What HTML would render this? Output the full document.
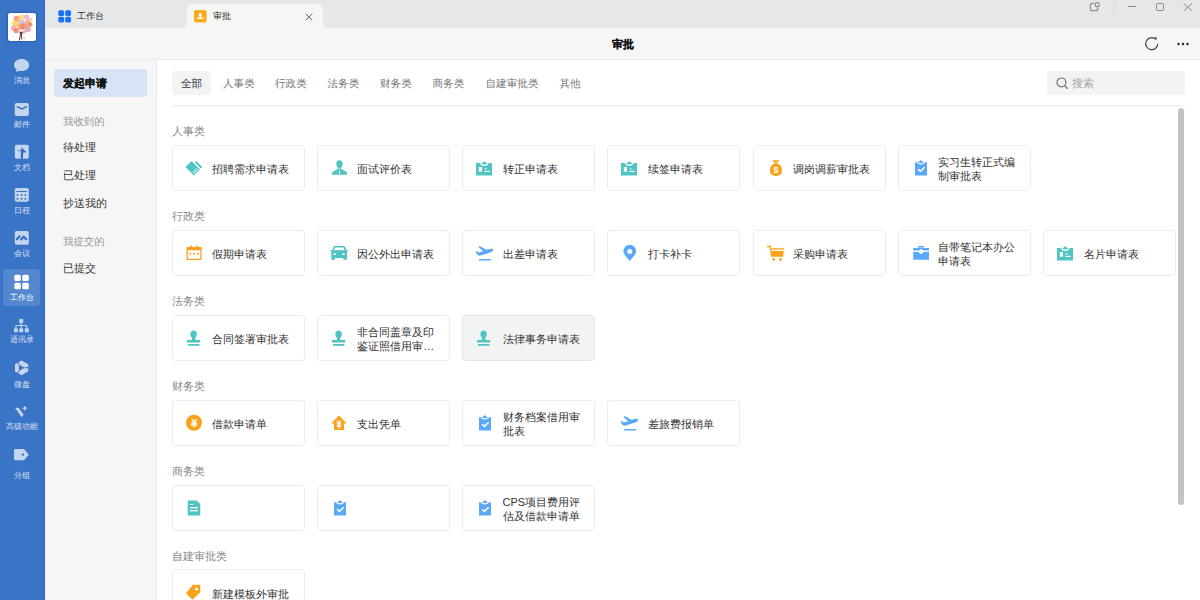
<!DOCTYPE html>
<html><head><meta charset="utf-8"><style>
*{box-sizing:border-box;margin:0;padding:0}
html,body{width:1200px;height:600px;overflow:hidden;background:#fff;font-family:"Liberation Sans",sans-serif;color:#333}
#side{position:absolute;left:0;top:0;width:45px;height:600px;background:#3a74c7;border-right:2.5px solid #336ccb}
#avatar{position:absolute;left:8px;top:13px;width:28px;height:28px;background:#fff;border-radius:2px;overflow:hidden;box-shadow:0 0 1.5px 1px rgba(30,80,170,0.6)}
#avatar svg{display:block}
.sic{position:absolute;left:13px;width:18px;height:16px}
.sic svg{display:block}
.slab{position:absolute;left:0;width:43px;text-align:center;font-size:8.25px;line-height:8.25px;color:rgba(255,255,255,0.8)}
.slab.on{color:#fff}
#sact{position:absolute;left:3px;top:269px;width:37px;height:37px;border-radius:4px;background:rgba(255,255,255,0.14)}
#tabbar{position:absolute;left:45px;top:0;width:1155px;height:28px;background:#e6e7e9}
#acttab{position:absolute;left:187px;top:4px;width:136px;height:24px;background:#f6f6f6;border-radius:6px 6px 0 0}
#acttab:before,#acttab:after{content:"";position:absolute;bottom:0;width:5px;height:5px;background:radial-gradient(circle at 0 0,transparent 5px,#f6f6f6 5px)}
#acttab:before{left:-5px;background:radial-gradient(circle at 0 0,transparent 4.5px,#f6f6f6 5px)}
#acttab:after{right:-5px;background:radial-gradient(circle at 100% 0,transparent 4.5px,#f6f6f6 5px)}
#hdr{position:absolute;left:45px;top:28px;width:1155px;height:32px;background:#f6f6f6;border-bottom:1px solid #ebebeb}
#nav{position:absolute;left:45px;top:60px;width:111.5px;height:540px;background:#f6f6f6;border-right:1.5px solid #ebebed}
.t{position:absolute;white-space:nowrap}
.tabt{font-size:9px;line-height:9px;color:#2a2a2a;top:12.2px}
#title{left:612.3px;top:39.2px;font-size:11px;line-height:11px;font-weight:bold;color:#111;-webkit-text-stroke:0.15px #111}
#navact{position:absolute;left:54px;top:69px;width:92.5px;height:27.5px;border-radius:3px;background:#d6e4f6}
.nav{left:63px;font-size:10.5px;line-height:10.5px;color:#333}
.nav.g{color:#999;font-size:10.4px;line-height:10.4px;text-rendering:geometricPrecision}
#navh{left:63px;top:77.8px;font-size:11px;line-height:11px;font-weight:bold;color:#111;-webkit-text-stroke:0.15px #111}
#ftabon{position:absolute;left:172px;top:71px;width:39px;height:23.5px;border-radius:3px;background:#f2f3f3}
.ftab{top:78.5px;font-size:10.6px;line-height:10.6px;color:#777;text-rendering:geometricPrecision}
.ftab.on{color:#333}
#fline{position:absolute;left:172px;top:105px;width:1013px;height:2px;background:#f3f3f3}
#search{position:absolute;left:1047px;top:70.5px;width:138px;height:24.5px;border-radius:3px;background:#f2f3f3}
#searcht{left:1072px;top:77.5px;font-size:10.5px;line-height:10.5px;color:#a3a3a3}
#scroll{position:absolute;left:1178px;top:108px;width:6px;height:397px;border-radius:3px;background:#c0c3c7}
.sec{position:absolute;left:172px;font-size:10.5px;line-height:10.5px;color:#888}
.card{position:absolute;width:133px;height:46px;border:1px solid #ebeded;border-radius:3.5px;background:#fff}
.card.hov{background:#f2f3f3;border-color:#e4e4e4}
.ic{position:absolute;left:11px;top:12px;width:20px;height:20px}
.ic svg{display:block}
.ct{position:absolute;left:39.5px;top:1.1px;width:86px;height:44px;display:flex;align-items:center;font-size:11px;line-height:14px;color:#333}
.ct span{display:-webkit-box;-webkit-line-clamp:2;-webkit-box-orient:vertical;overflow:hidden}
</style></head><body>
<div id="side"></div>
<div id="avatar"><svg width="28" height="28" viewBox="0 0 28 28"><circle cx="8.6" cy="5.8" r="3" fill="#f58a6a" opacity="0.82"/><circle cx="14" cy="4" r="2.8" fill="#f9d36b" opacity="0.82"/><circle cx="18.8" cy="4.2" r="2.6" fill="#e8a6d8" opacity="0.82"/><circle cx="7.4" cy="10.6" r="3" fill="#f8cf55" opacity="0.82"/><circle cx="14" cy="9.4" r="3" fill="#b9bdea" opacity="0.82"/><circle cx="20" cy="9.4" r="2.8" fill="#f6a46c" opacity="0.82"/><circle cx="22.4" cy="11.6" r="2.2" fill="#ee7a60" opacity="0.82"/><circle cx="5.6" cy="15.2" r="2.6" fill="#f29bb0" opacity="0.82"/><circle cx="8.2" cy="17.6" r="2.6" fill="#f2734e" opacity="0.82"/><circle cx="14" cy="13.6" r="3.2" fill="#f2665c" opacity="0.82"/><circle cx="20" cy="16" r="3" fill="#d99aa8" opacity="0.82"/><circle cx="11" cy="12.6" r="2.4" fill="#f7b26a" opacity="0.82"/><circle cx="17.2" cy="12.6" r="2.6" fill="#f58d78" opacity="0.82"/><circle cx="16.4" cy="18.6" r="2" fill="#f0a0a0" opacity="0.82"/><circle cx="11.2" cy="7.2" r="2" fill="#f4c07a" opacity="0.82"/><circle cx="10.5" cy="16.6" r="2.2" fill="#f6a080" opacity="0.82"/><circle cx="4.8" cy="9" r="1.6" fill="#f9e08a" opacity="0.82"/><circle cx="22.5" cy="6.5" r="1.8" fill="#f6c3a0" opacity="0.82"/><circle cx="13.1" cy="18" r="1.7" fill="#fff"/><path d="M11.4 19.6 Q13 17.6 14.8 19.4 L14.2 21 H12 Z" fill="#3a2a28" opacity="0.9"/><path d="M12.6 21 L11.3 27.5 M13.6 21 L13.6 26.5" stroke="#5b3e34" stroke-width="1"/><rect x="15.5" y="23.6" width="1.3" height="3" fill="#e8d58a"/></svg></div>
<div id="sact"></div>
<div class="sic" style="top:57.5px"><svg width="18" height="16" viewBox="0 0 18 16"><path d="M8.6 0.9 C12.9 0.9 16.2 3.5 16.2 7 C16.2 10.4 12.9 13.1 8.6 13.1 C7.8 13.1 7 13 6.3 12.8 L2.6 14.1 L3.6 11.5 C2 10.4 1 8.8 1 7 C1 3.5 4.3 0.9 8.6 0.9 Z" fill="#c3d5ef"/></svg></div><div class="t slab" style="top:77px">消息</div>
<div class="sic" style="top:101.5px"><svg width="18" height="16" viewBox="0 0 18 16"><rect x="1.8" y="0.9" width="14" height="13.2" rx="1.8" fill="#c3d5ef"/><path d="M4.2 4.6 L8.8 7.1 L13.4 4.6" stroke="#3369c2" stroke-width="1.2" fill="none" stroke-linecap="round"/></svg></div><div class="t slab" style="top:120.5px">邮件</div>
<div class="sic" style="top:144px"><svg width="18" height="16" viewBox="0 0 18 16"><rect x="1.8" y="0.8" width="14" height="14" rx="1.8" fill="#c3d5ef"/><path d="M3.2 6.5 Q5.6 6.6 8 7.4 L7.7 14.8 H9.9 L10.2 8.4 L13.5 8.3 L8.4 3.2 L8.2 6.4 Q5.6 6 3.2 6.5 Z" fill="#3369c2"/></svg></div><div class="t slab" style="top:163.5px">文档</div>
<div class="sic" style="top:187px"><svg width="18" height="16" viewBox="0 0 18 16"><rect x="1.8" y="0.9" width="14" height="13.9" rx="1.8" fill="#c3d5ef"/><rect x="3.4" y="4" width="10.4" height="0.9" fill="#3369c2"/><g fill="#3369c2"><rect x="3.6" y="7.2" width="1.6" height="1.6"/><rect x="7.8" y="7.2" width="1.6" height="1.6"/><rect x="11.6" y="7.2" width="1.6" height="1.6"/><rect x="3.6" y="11" width="1.6" height="1.6"/><rect x="7.8" y="11" width="1.6" height="1.6"/><rect x="11.6" y="11" width="1.6" height="1.6"/></g></svg></div><div class="t slab" style="top:206.7px">日程</div>
<div class="sic" style="top:230.3px"><svg width="18" height="16" viewBox="0 0 18 16"><rect x="1.8" y="0.9" width="14" height="13.9" rx="1.8" fill="#c3d5ef"/><path d="M3.8 9.2 L6.6 6.2 M7.9 9.6 L10.6 6.6 L13.2 9.3" stroke="#3369c2" stroke-width="2" fill="none" stroke-linecap="round" stroke-linejoin="round"/></svg></div><div class="t slab" style="top:250px">会议</div>
<div class="sic" style="top:273.5px"><svg width="18" height="16" viewBox="0 0 18 16"><g fill="#fff"><rect x="1.4" y="0.7" width="6.4" height="6.4" rx="1.5"/><rect x="9.3" y="0.7" width="6.5" height="6.4" rx="1.5"/><rect x="1.4" y="8.7" width="6.4" height="6.6" rx="1.5"/><rect x="9.3" y="8.7" width="6.5" height="6.6" rx="1.5"/></g></svg></div><div class="t slab on" style="top:293.5px">工作台</div>
<div class="sic" style="top:317.5px"><svg width="18" height="16" viewBox="0 0 18 16"><g fill="#c3d5ef"><rect x="6.2" y="1.1" width="4" height="4" rx="0.6"/><rect x="1" y="10.3" width="3.8" height="4" rx="0.6"/><rect x="6.2" y="10.3" width="4" height="4" rx="0.6"/><rect x="11.8" y="10.3" width="4" height="4" rx="0.6"/></g><path d="M8.2 5 V10.3 M2.9 10.3 V8.6 Q2.9 7.5 4 7.5 H12.8 Q13.8 7.5 13.8 8.6 V10.3" stroke="#c3d5ef" stroke-width="1.2" fill="none"/></svg></div><div class="t slab" style="top:336px">通讯录</div>
<div class="sic" style="top:360px"><svg width="18" height="16" viewBox="0 0 18 16"><path d="M8.6 0.6 L15.2 4.2 V11.6 L8.6 15.2 L2 11.6 V4.2 Z M5.9 4.6 L11.6 7.7 L5.9 10.9 Z" fill="#c3d5ef" fill-rule="evenodd"/><path d="M5.2 2.4 L5.9 4.6 M15.2 7.7 L11.6 7.7 M5.9 10.9 L4.8 13.4" stroke="#3369c2" stroke-width="1" fill="none"/></svg></div><div class="t slab" style="top:380.7px">微盘</div>
<div class="sic" style="top:405px"><svg width="18" height="16" viewBox="0 0 18 16"><path d="M2.2 3 L5.6 2.8 L10.6 9.8 L8.6 12.2 Z" fill="#c3d5ef"/><path d="M11.8 0.4 L12.7 2.3 L14.6 3.2 L12.7 4.1 L11.8 6 L10.9 4.1 L9 3.2 L10.9 2.3 Z" fill="#c3d5ef"/></svg></div><div class="t slab" style="top:422.5px">高级功能</div>
<div class="sic" style="top:448px"><svg width="18" height="16" viewBox="0 0 18 16"><path d="M2.4 1 H11 L15.8 6.6 L11 12.2 H2.4 Q1 12.2 1 10.8 V2.4 Q1 1 2.4 1 Z M10 5.4 A1.2 1.2 0 1 0 10 7.8 A1.2 1.2 0 1 0 10 5.4 Z" fill="#c3d5ef" fill-rule="evenodd"/></svg></div><div class="t slab" style="top:471.7px">分组</div>
<div id="tabbar"></div>
<div id="acttab"></div>
<svg style="position:absolute;left:58px;top:9.5px" width="14" height="13" viewBox="0 0 14 13"><g fill="#1a73f5"><rect x="0.3" y="0.2" width="5.8" height="5.8" rx="1.5"/><rect x="7.2" y="0.2" width="5.8" height="5.8" rx="1.5"/><rect x="0.3" y="6.8" width="5.8" height="5.8" rx="1.5"/><rect x="7.2" y="6.8" width="5.8" height="5.8" rx="1.5"/></g></svg>
<div class="t tabt" style="left:76.8px">工作台</div>
<svg style="position:absolute;left:194px;top:9.6px" width="13" height="13" viewBox="0 0 13 13"><rect width="12.6" height="12.6" rx="2" fill="#f7ab1e"/><g fill="#fff"><circle cx="6.3" cy="4.6" r="1.5"/><rect x="5.6" y="5" width="1.4" height="2.6"/><rect x="3.2" y="7.4" width="6.2" height="1.6" rx="0.4"/></g></svg>
<div class="t tabt" style="left:212.5px">审批</div>
<svg style="position:absolute;left:304.5px;top:12.6px" width="8" height="8" viewBox="0 0 8 8"><path d="M0.5 0.5 L7.3 7.3 M7.3 0.5 L0.5 7.3" stroke="#555" stroke-width="0.9"/></svg>
<svg style="position:absolute;left:1089px;top:2px" width="12" height="10" viewBox="0 0 12 10"><path d="M5 1.3 H3.4 Q1.4 1.3 1.4 3.3 V6.7 Q1.4 8.7 3.4 8.7 H6.9 Q8.9 8.7 8.9 6.7 V5.4" stroke="#8e8e8e" stroke-width="1.2" fill="none"/><rect x="6.3" y="0.6" width="3.9" height="4" rx="1.4" stroke="#8e8e8e" stroke-width="1.2" fill="none"/></svg>
<div style="position:absolute;left:1114px;top:3px;width:1px;height:8px;background:#dcdcdc"></div>
<div style="position:absolute;left:1128px;top:6px;width:8px;height:1px;background:#8a8a8a"></div>
<div style="position:absolute;left:1155.5px;top:3px;width:8.5px;height:7.5px;border:1px solid #8a8a8a;border-radius:1.5px"></div>
<svg style="position:absolute;left:1183px;top:2.5px" width="9.5" height="8.5" viewBox="0 0 9.5 8.5"><path d="M0.5 0.3 L9 8.2 M9 0.3 L0.5 8.2" stroke="#8a8a8a" stroke-width="1"/></svg>
<div id="hdr"></div>
<div class="t" id="title">审批</div>
<svg style="position:absolute;left:1144px;top:36px" width="16" height="16" viewBox="0 0 16 16"><path d="M13.7 7.7 A6 6 0 1 1 10.4 2.3" stroke="#444" stroke-width="1.15" fill="none"/><path d="M9.6 1.9 L12.7 0.9 L12 4.3 Z" fill="#333"/></svg>
<svg style="position:absolute;left:1176px;top:42px" width="14" height="4" viewBox="0 0 14 4"><g fill="#222"><circle cx="2.5" cy="2" r="1.2"/><circle cx="7" cy="2" r="1.2"/><circle cx="11.5" cy="2" r="1.2"/></g></svg>
<div id="nav"></div>
<div id="navact"></div>
<div class="t" id="navh">发起申请</div>
<div class="t nav g" style="top:118px">我收到的</div>
<div class="t nav " style="top:142.2px">待处理</div>
<div class="t nav " style="top:170px">已处理</div>
<div class="t nav " style="top:198px">抄送我的</div>
<div class="t nav g" style="top:238px">我提交的</div>
<div class="t nav " style="top:263.2px">已提交</div>
<div id="ftabon"></div>
<div class="t ftab on" style="left:181px">全部</div>
<div class="t ftab" style="left:223px">人事类</div>
<div class="t ftab" style="left:275px">行政类</div>
<div class="t ftab" style="left:327.5px">法务类</div>
<div class="t ftab" style="left:380px">财务类</div>
<div class="t ftab" style="left:432.5px">商务类</div>
<div class="t ftab" style="left:485.5px">自建审批类</div>
<div class="t ftab" style="left:559.5px">其他</div>
<div id="fline"></div>
<div id="search"></div>
<svg style="position:absolute;left:1056px;top:76.5px" width="13" height="13" viewBox="0 0 13 13"><circle cx="5.4" cy="5.4" r="4.4" stroke="#747474" stroke-width="1.2" fill="none"/><path d="M8.6 8.6 L11.8 11.8" stroke="#747474" stroke-width="1.3"/></svg>
<div class="t" id="searcht">搜索</div>
<div id="scroll"></div>
<div class="sec" style="top:126.0px">人事类</div>
<div class="card" style="left:171.5px;top:144.7px"><div class="ic"><svg width="20" height="20" viewBox="0 0 20 20"><g transform="translate(1.5 9) rotate(45)"><rect x="0" y="-8.5" width="12" height="8.5" fill="#50c4c1"/><g fill="#fff"><rect x="8.2" y="-6.9" width="4" height="0.85"/><rect x="8.2" y="-4.75" width="4" height="0.85"/><rect x="8.2" y="-2.6" width="4" height="0.85"/></g><rect x="3.2" y="-11.8" width="8.8" height="1.9" rx="0.5" fill="#50c4c1"/></g></svg></div><div class="ct"><span>招聘需求申请表</span></div></div>
<div class="card" style="left:316.75px;top:144.7px"><div class="ic"><svg width="20" height="20" viewBox="0 0 20 20"><g fill="#50c4c1"><path d="M10.5 2.3 C12.6 2.3 13.8 3.9 13.7 6 C13.6 8 12.4 9.6 11.4 10.4 H9.6 C8.6 9.6 7.4 8 7.3 6 C7.2 3.9 8.4 2.3 10.5 2.3 Z"/><path d="M9.2 10.4 H11.8 L17.4 14.1 Q18 14.5 18 15.2 V16.8 H3 V15.2 Q3 14.5 3.6 14.1 Z"/><path d="M10.5 11 L11.1 14.8 L10.5 16 L9.9 14.8 Z" fill="#fff"/></g></svg></div><div class="ct"><span>面试评价表</span></div></div>
<div class="card" style="left:462.0px;top:144.7px"><div class="ic"><svg width="20" height="20" viewBox="0 0 20 20"><g fill="#50c4c1"><path d="M2 5 H5.8 Q6.8 7.9 10.25 7.9 Q13.7 7.9 14.7 5 H18 V17.5 H2 Z"/><path d="M6.9 5.5 Q7.9 5.1 8.7 4.5 L10.25 3.3 L11.8 4.5 Q12.6 5.1 13.6 5.5 Q12.4 6.4 10.25 6.4 Q8.1 6.4 6.9 5.5 Z"/><rect x="4.8" y="9" width="3.2" height="4.7" fill="#fff"/><rect x="10.2" y="10.2" width="3" height="1.3" fill="#fff" opacity="0.55"/><rect x="10.2" y="12.8" width="5.6" height="1.1" fill="#fff"/></g></svg></div><div class="ct"><span>转正申请表</span></div></div>
<div class="card" style="left:607.25px;top:144.7px"><div class="ic"><svg width="20" height="20" viewBox="0 0 20 20"><g fill="#50c4c1"><path d="M2 5 H5.8 Q6.8 7.9 10.25 7.9 Q13.7 7.9 14.7 5 H18 V17.5 H2 Z"/><path d="M6.9 5.5 Q7.9 5.1 8.7 4.5 L10.25 3.3 L11.8 4.5 Q12.6 5.1 13.6 5.5 Q12.4 6.4 10.25 6.4 Q8.1 6.4 6.9 5.5 Z"/><rect x="4.8" y="9" width="3.2" height="4.7" fill="#fff"/><rect x="10.2" y="10.2" width="3" height="1.3" fill="#fff" opacity="0.55"/><rect x="10.2" y="12.8" width="5.6" height="1.1" fill="#fff"/></g></svg></div><div class="ct"><span>续签申请表</span></div></div>
<div class="card" style="left:752.5px;top:144.7px"><div class="ic"><svg width="20" height="20" viewBox="0 0 20 20"><g fill="#fba21a"><rect x="7.7" y="2.2" width="6.4" height="1.8" rx="0.9"/><path d="M9 4.6 H12.8 L12.3 5.4 Q17 6.8 17 12.3 Q17 18 10.9 18 Q4.9 18 4.9 12.3 Q4.9 6.8 9.5 5.4 Z"/></g><text x="10.9" y="15.2" font-size="9" font-weight="bold" text-anchor="middle" fill="#fff" font-family="Liberation Sans">$</text></svg></div><div class="ct"><span>调岗调薪审批表</span></div></div>
<div class="card" style="left:897.75px;top:144.7px"><div class="ic"><svg width="20" height="20" viewBox="0 0 20 20"><g fill="#5aa8fa"><path d="M5 4.2 H6.8 Q7.6 6.4 10.9 6.4 Q14.2 6.4 15 4.2 H17 V17.5 H5 Z"/><path d="M7.8 4.4 Q8.8 4.1 9.6 3.3 L10.9 2.1 L12.2 3.3 Q13 4.1 14 4.4 Q13 5.2 10.9 5.2 Q8.8 5.2 7.8 4.4 Z"/></g><path d="M8.1 11.2 L10.4 13.4 L14.6 9.3" stroke="#fff" stroke-width="1.5" fill="none"/></svg></div><div class="ct"><span>实习生转正式编制审批表</span></div></div>
<div class="sec" style="top:210.95px">行政类</div>
<div class="card" style="left:171.5px;top:229.65px"><div class="ic"><svg width="20" height="20" viewBox="0 0 20 20"><g fill="#fba21a"><path d="M2.6 4 H17.6 V17 H2.6 Z M3.9 7.2 V15.8 H16.3 V7.2 Z" fill-rule="evenodd"/><rect x="6.4" y="2.3" width="1.6" height="2.5" rx="0.6"/><rect x="12" y="2.3" width="1.6" height="2.5" rx="0.6"/><circle cx="6.3" cy="10.7" r="1"/><circle cx="10.1" cy="10.7" r="1"/><circle cx="13.9" cy="10.7" r="1"/></g></svg></div><div class="ct"><span>假期申请表</span></div></div>
<div class="card" style="left:316.75px;top:229.65px"><div class="ic"><svg width="20" height="20" viewBox="0 0 20 20"><g fill="#50c4c1"><path d="M6 3 H14.6 Q15.8 3 16.3 4.3 L17.4 7.6 H3.2 L4.3 4.3 Q4.8 3 6 3 Z M5.9 4.5 L5.2 7 H15.3 L14.6 4.5 Z" fill-rule="evenodd"/><path d="M1.3 6.9 H4 V8.5 H1.9 Z M16.4 6.9 H19 L18.4 8.5 H16.4 Z"/><path d="M2.3 7.6 H18 V16.8 H14.3 V15 H6 V16.8 H2.3 Z"/></g><rect x="4.5" y="10.4" width="2.5" height="1.6" fill="#fff"/><rect x="13.2" y="10.4" width="2.5" height="1.6" fill="#fff"/></svg></div><div class="ct"><span>因公外出申请表</span></div></div>
<div class="card" style="left:462.0px;top:229.65px"><div class="ic"><svg width="20" height="20" viewBox="0 0 20 20"><g fill="#5aa8fa"><path d="M1.8 8.7 Q2.5 7.6 3.5 8.4 L4.8 9.4 L9.3 8.2 L4.8 4.6 Q4.3 3.1 6 3.3 L12.4 6.8 L16.4 5.8 Q19.2 5.4 19.3 7 Q19.3 8.3 16.3 9.4 L6.6 12.5 Q4.3 13.1 3 11.2 Z"/><rect x="5" y="15.9" width="12" height="1.5" rx="0.3"/></g></svg></div><div class="ct"><span>出差申请表</span></div></div>
<div class="card" style="left:607.25px;top:229.65px"><div class="ic"><svg width="20" height="20" viewBox="0 0 20 20"><path d="M10.75 18 L6 12.3 A6.3 6.3 0 1 1 15.5 12.3 Z M10.75 6 A2.5 2.5 0 1 0 10.75 11 A2.5 2.5 0 1 0 10.75 6 Z" fill="#5aa8fa" fill-rule="evenodd"/></svg></div><div class="ct"><span>打卡补卡</span></div></div>
<div class="card" style="left:752.5px;top:229.65px"><div class="ic"><svg width="20" height="20" viewBox="0 0 20 20"><g fill="#fba21a"><path d="M2 2.8 H5.8 L7.4 13.8 H6.1 L4.7 4.2 H2.6 Q2 4.2 2 3.5 Z"/><rect x="6.4" y="4.9" width="12.8" height="1.8" opacity="0.8"/><path d="M6.2 8 H18.8 L18 13.7 H7 Z"/><circle cx="8.5" cy="16.4" r="1.4"/><circle cx="15.5" cy="16.4" r="1.4"/></g></svg></div><div class="ct"><span>采购申请表</span></div></div>
<div class="card" style="left:897.75px;top:229.65px"><div class="ic"><svg width="20" height="20" viewBox="0 0 20 20"><g fill="#5aa8fa"><rect x="8" y="3" width="6" height="1.6"/><path d="M3.2 5 H19 V7.6 H13.2 Q12.3 6 11.1 6 Q9.9 6 9 7.6 H3.2 Z"/><path d="M3.2 9 H8.8 Q9.6 10.9 11.1 10.9 Q12.6 10.9 13.4 9 H19 V16.8 H3.2 Z"/></g></svg></div><div class="ct"><span>自带笔记本办公申请表</span></div></div>
<div class="card" style="left:1043.0px;top:229.65px"><div class="ic"><svg width="20" height="20" viewBox="0 0 20 20"><g fill="#50c4c1"><path d="M2 5 H5.8 Q6.8 7.9 10.25 7.9 Q13.7 7.9 14.7 5 H18 V17.5 H2 Z"/><path d="M6.9 5.5 Q7.9 5.1 8.7 4.5 L10.25 3.3 L11.8 4.5 Q12.6 5.1 13.6 5.5 Q12.4 6.4 10.25 6.4 Q8.1 6.4 6.9 5.5 Z"/><rect x="4.8" y="9" width="3.2" height="4.7" fill="#fff"/><rect x="10.2" y="10.2" width="3" height="1.3" fill="#fff" opacity="0.55"/><rect x="10.2" y="12.8" width="5.6" height="1.1" fill="#fff"/></g></svg></div><div class="ct"><span>名片申请表</span></div></div>
<div class="sec" style="top:295.9px">法务类</div>
<div class="card" style="left:171.5px;top:314.6px"><div class="ic"><svg width="20" height="20" viewBox="0 0 20 20"><g fill="#50c4c1"><ellipse cx="9.6" cy="6.2" rx="3.2" ry="3.7"/><path d="M8.1 8.5 H11.1 L11.5 12.3 H7.7 Z"/><rect x="3" y="12" width="13.3" height="2.6" rx="0.5"/><rect x="4" y="16" width="11.5" height="1.7" rx="0.3"/></g></svg></div><div class="ct"><span>合同签署审批表</span></div></div>
<div class="card" style="left:316.75px;top:314.6px"><div class="ic"><svg width="20" height="20" viewBox="0 0 20 20"><g fill="#50c4c1"><ellipse cx="9.6" cy="6.2" rx="3.2" ry="3.7"/><path d="M8.1 8.5 H11.1 L11.5 12.3 H7.7 Z"/><rect x="3" y="12" width="13.3" height="2.6" rx="0.5"/><rect x="4" y="16" width="11.5" height="1.7" rx="0.3"/></g></svg></div><div class="ct"><span>非合同盖章及印鉴证照借用审批表</span></div></div>
<div class="card hov" style="left:462.0px;top:314.6px"><div class="ic"><svg width="20" height="20" viewBox="0 0 20 20"><g fill="#50c4c1"><ellipse cx="9.6" cy="6.2" rx="3.2" ry="3.7"/><path d="M8.1 8.5 H11.1 L11.5 12.3 H7.7 Z"/><rect x="3" y="12" width="13.3" height="2.6" rx="0.5"/><rect x="4" y="16" width="11.5" height="1.7" rx="0.3"/></g></svg></div><div class="ct"><span>法律事务申请表</span></div></div>
<div class="sec" style="top:380.85px">财务类</div>
<div class="card" style="left:171.5px;top:399.55px"><div class="ic"><svg width="20" height="20" viewBox="0 0 20 20"><circle cx="10" cy="9.75" r="8" fill="#fba21a"/><path d="M7.9 6.2 L10.2 9 L12.5 6.2 M7.2 9.9 H13.2 M7.2 12.1 H13.2 M10.2 9 V14.6" stroke="#fff" stroke-width="1.5" fill="none"/></svg></div><div class="ct"><span>借款申请单</span></div></div>
<div class="card" style="left:316.75px;top:399.55px"><div class="ic"><svg width="20" height="20" viewBox="0 0 20 20"><path d="M10 2.5 L17.8 10.5 H15 V17 H5 V10.5 H2.2 Z" fill="#fba21a"/><path d="M8 7.6 L10 10 L12 7.6 M7.6 10.9 H12.4 M7.6 13.1 H12.4 M10 10 V15.4" stroke="#fff" stroke-width="1.4" fill="none"/></svg></div><div class="ct"><span>支出凭单</span></div></div>
<div class="card" style="left:462.0px;top:399.55px"><div class="ic"><svg width="20" height="20" viewBox="0 0 20 20"><g fill="#5aa8fa"><path d="M5 4.2 H6.8 Q7.6 6.4 10.9 6.4 Q14.2 6.4 15 4.2 H17 V17.5 H5 Z"/><path d="M7.8 4.4 Q8.8 4.1 9.6 3.3 L10.9 2.1 L12.2 3.3 Q13 4.1 14 4.4 Q13 5.2 10.9 5.2 Q8.8 5.2 7.8 4.4 Z"/></g><path d="M8.1 11.2 L10.4 13.4 L14.6 9.3" stroke="#fff" stroke-width="1.5" fill="none"/></svg></div><div class="ct"><span>财务档案借用审批表</span></div></div>
<div class="card" style="left:607.25px;top:399.55px"><div class="ic"><svg width="20" height="20" viewBox="0 0 20 20"><g fill="#5aa8fa"><path d="M1.8 8.7 Q2.5 7.6 3.5 8.4 L4.8 9.4 L9.3 8.2 L4.8 4.6 Q4.3 3.1 6 3.3 L12.4 6.8 L16.4 5.8 Q19.2 5.4 19.3 7 Q19.3 8.3 16.3 9.4 L6.6 12.5 Q4.3 13.1 3 11.2 Z"/><rect x="5" y="15.9" width="12" height="1.5" rx="0.3"/></g></svg></div><div class="ct"><span>差旅费报销单</span></div></div>
<div class="sec" style="top:465.8px">商务类</div>
<div class="card" style="left:171.5px;top:484.5px"><div class="ic"><svg width="20" height="20" viewBox="0 0 20 20"><path d="M3.75 2.5 H12.5 L16.25 6 V17.5 H3.75 Z" fill="#50c4c1"/><g fill="#fff"><rect x="6.2" y="6" width="3" height="1"/><rect x="6.2" y="9" width="7.5" height="1.4"/><rect x="6.2" y="12" width="7.5" height="1.4"/></g></svg></div><div class="ct"><span></span></div></div>
<div class="card" style="left:316.75px;top:484.5px"><div class="ic"><svg width="20" height="20" viewBox="0 0 20 20"><g fill="#5aa8fa"><path d="M5 4.2 H6.8 Q7.6 6.4 10.9 6.4 Q14.2 6.4 15 4.2 H17 V17.5 H5 Z"/><path d="M7.8 4.4 Q8.8 4.1 9.6 3.3 L10.9 2.1 L12.2 3.3 Q13 4.1 14 4.4 Q13 5.2 10.9 5.2 Q8.8 5.2 7.8 4.4 Z"/></g><path d="M8.1 11.2 L10.4 13.4 L14.6 9.3" stroke="#fff" stroke-width="1.5" fill="none"/></svg></div><div class="ct"><span></span></div></div>
<div class="card" style="left:462.0px;top:484.5px"><div class="ic"><svg width="20" height="20" viewBox="0 0 20 20"><g fill="#5aa8fa"><path d="M5 4.2 H6.8 Q7.6 6.4 10.9 6.4 Q14.2 6.4 15 4.2 H17 V17.5 H5 Z"/><path d="M7.8 4.4 Q8.8 4.1 9.6 3.3 L10.9 2.1 L12.2 3.3 Q13 4.1 14 4.4 Q13 5.2 10.9 5.2 Q8.8 5.2 7.8 4.4 Z"/></g><path d="M8.1 11.2 L10.4 13.4 L14.6 9.3" stroke="#fff" stroke-width="1.5" fill="none"/></svg></div><div class="ct"><span>CPS项目费用评估及借款申请单</span></div></div>
<div class="sec" style="top:550.75px">自建审批类</div>
<div class="card" style="left:171.5px;top:569.45px"><div class="ic"><svg width="20" height="20" viewBox="0 0 20 20"><path d="M9 2.8 H16.2 L16.4 10 L8.5 17.8 L1.9 11.2 Z M12.6 5.4 A1.5 1.5 0 1 0 12.6 8.4 A1.5 1.5 0 1 0 12.6 5.4 Z" fill="#fba21a" fill-rule="evenodd"/></svg></div><div class="ct"><span>新建模板外审批</span></div></div>
</body></html>
